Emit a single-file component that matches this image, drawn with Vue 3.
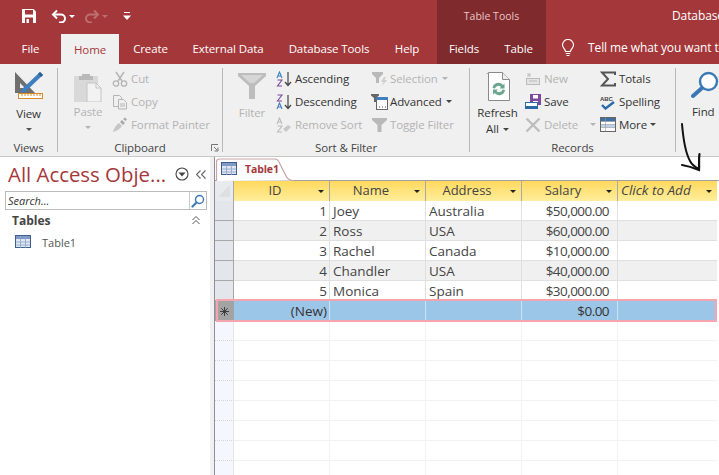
<script setup>
const columns = [
  { name: 'ID' },
  { name: 'Name' },
  { name: 'Address' },
  { name: 'Salary' },
  { name: 'Click to Add', add: true },
]
const rows = [
  ['1', 'Joey', 'Australia', '$50,000.00'],
  ['2', 'Ross', 'USA', '$60,000.00'],
  ['3', 'Rachel', 'Canada', '$10,000.00'],
  ['4', 'Chandler', 'USA', '$40,000.00'],
  ['5', 'Monica', 'Spain', '$30,000.00'],
]
const blanks = 8
</script>

<template>
  <div class="app">
    <header class="top">
      <div class="title-row">
        <div class="qat">
          <svg class="q-save" width="16" height="16" viewBox="0 0 16 16"><path d="M1 1h11.5L15 3.500V15H1z" fill="#fff"/><rect x="4" y="2" width="8" height="4.500" fill="#a4373a"/><rect x="4" y="9.500" width="8" height="5.500" fill="#a4373a"/><rect x="5.500" y="11" width="2.400" height="4" fill="#fff"/></svg>
          <svg class="q-undo" width="16" height="14" viewBox="0 0 16 14"><path d="M6 1.500 2 5.500l4 4" fill="none" stroke="#fff" stroke-width="2"/><path d="M2.500 5.500H10a4 4 0 0 1 0 8H8" fill="none" stroke="#fff" stroke-width="2"/></svg>
          <span class="q-caret"></span>
          <svg class="q-redo" width="16" height="14" viewBox="0 0 16 14"><path d="M10 1.500l4 4-4 4" fill="none" stroke="#bd6f71" stroke-width="2"/><path d="M13.500 5.500H6a4 4 0 0 0 0 8h2" fill="none" stroke="#bd6f71" stroke-width="2"/></svg>
          <span class="q-caret dim"></span>
          <svg class="q-more" width="8" height="9" viewBox="0 0 8 9"><rect x="1" y="0" width="6" height="1" fill="#fff"/><path d="M0 3.500h8L4 8z" fill="#fff"/></svg>
        </div>
        <div class="ctx-title">Table Tools</div>
        <div class="doc-title">Database</div>
      </div>
      <nav class="tabs">
        <span class="tab w-file">File</span>
        <span class="tab w-home active">Home</span>
        <span class="tab w-create">Create</span>
        <span class="tab w-ext">External Data</span>
        <span class="tab w-db">Database Tools</span>
        <span class="tab w-help">Help</span>
        <span class="tab w-fields ctx">Fields</span>
        <span class="tab w-table ctx">Table</span>
        <svg class="bulb" width="14" height="18" viewBox="0 0 14 18"><path d="M4.500 12.500C4.500 10 1.500 9 1.500 6a5.500 5.500 0 0 1 11 0c0 3-3 4-3 6.500z" fill="none" stroke="#fff" stroke-width="1.200"/><path d="M4.800 14.500h4.400M5.500 16.500h3" stroke="#fff" stroke-width="1.200"/></svg>
        <span class="tell">Tell me what you want to</span>
      </nav>
    </header>

    <section class="ribbon">
      <div class="group g-views">
        <div class="g-body center-col">
          <svg class="big-icon" width="30" height="30" viewBox="0 0 30 30">
            <path d="M1 2v21h20zM6 13v5h5z" fill="#6e6e6e" fill-rule="evenodd"/>
            <path d="M26 2l3 3L11 22l-4 1 1-4z" fill="#3f7fbf"/>
            <path d="M26 2l3 3-2 2-3-3z" fill="#2a5f9a"/>
            <rect x="4.500" y="23.500" width="24" height="5" fill="#fff" stroke="#d58b2c"/>
            <path d="M8 24v2M11 24v2M14 24v2M17 24v2M20 24v2M23 24v2M26 24v2" stroke="#d58b2c"/>
          </svg>
          <span class="lbl-big">View</span>
          <span class="drop"></span>
        </div>
        <div class="g-name">Views</div>
      </div>
      <i class="sep"></i>

      <div class="group g-clip">
        <div class="g-body">
          <div class="center-col paste">
            <svg class="big-icon" width="28" height="29" viewBox="0 0 28 29">
              <path d="M0 3h24v26H0z" fill="#d9d9d9"/>
              <path d="M8 1h8v2h3v4H5V3h3z" fill="#b9b9b9"/>
              <path d="M13 10h9l5 5v14H13z" fill="#f2f2f2" stroke="#c4c4c4"/>
              <path d="M22 10v5h5" fill="none" stroke="#c4c4c4"/>
            </svg>
            <span class="lbl-big off">Paste</span>
            <span class="drop off"></span>
          </div>
          <div class="small-col">
            <div class="item off">
              <svg width="16" height="16" viewBox="0 0 16 16"><path d="M4 1l6 9M12 1 6 10" stroke="#b5b5b5" stroke-width="1.500" fill="none"/><circle cx="4" cy="12.500" r="2.700" fill="none" stroke="#b5b5b5" stroke-width="1.300"/><circle cx="12" cy="12.500" r="2.700" fill="none" stroke="#b5b5b5" stroke-width="1.300"/></svg>
              <span>Cut</span>
            </div>
            <div class="item off">
              <svg width="16" height="16" viewBox="0 0 16 16"><path d="M1.500 1.500h6l2 2v9h-8z" fill="#f0f0f0" stroke="#b5b5b5"/><path d="M6.500 5.500h5l3 3v6.500h-8z" fill="#f0f0f0" stroke="#b5b5b5"/><path d="M8 10h5M8 12h5" stroke="#b5b5b5"/></svg>
              <span>Copy</span>
            </div>
            <div class="item off">
              <svg width="16" height="16" viewBox="0 0 16 16"><path d="M1 15c1-4 3-7 6-9l3 3c-2 3-5 5-9 6z" fill="#c6c6c6"/><path d="M8 5l2-2 3 3-2 2zM11 2l2-1.500 2 2L13.500 4z" fill="#a9a9a9"/></svg>
              <span>Format Painter</span>
            </div>
          </div>
        </div>
        <div class="g-name">Clipboard</div>
        <svg class="launcher" width="8" height="8" viewBox="0 0 8 8"><path d="M.5 7V.5H7" fill="none" stroke="#777"/><path d="M3 3l3.500 3.500M7 3.500V7H3.500" fill="none" stroke="#777"/></svg>
      </div>
      <i class="sep"></i>

      <div class="group g-sort">
        <div class="g-body">
          <div class="center-col filter">
            <svg class="big-icon" width="28" height="28" viewBox="0 0 28 28"><path d="M0 1h28v3L17 14v13h-6V14L0 4z" fill="#bdbdbd"/><path d="M3 3h22l-9 8h-4z" fill="#d6d6d6"/></svg>
            <span class="lbl-big off">Filter</span>
          </div>
          <div class="small-col sort-a">
            <div class="item">
              <svg width="16" height="16" viewBox="0 0 16 16"><path d="M12 1v13M9 11l3 3.500 3-3.500" fill="none" stroke="#444" stroke-width="1.200"/><path d="M1 7l2.500-6L6 7M2 5h3" fill="none" stroke="#3f7fbf" stroke-width="1.100"/><path d="M1.500 9H6l-4.500 6H6" fill="none" stroke="#7c4b9f" stroke-width="1.100"/></svg>
              <span>Ascending</span>
            </div>
            <div class="item">
              <svg width="16" height="16" viewBox="0 0 16 16"><path d="M12 1v13M9 11l3 3.500 3-3.500" fill="none" stroke="#444" stroke-width="1.200"/><path d="M1.500 1H6L1.500 7H6" fill="none" stroke="#7c4b9f" stroke-width="1.100"/><path d="M1 15l2.500-6L6 15M2 13h3" fill="none" stroke="#3f7fbf" stroke-width="1.100"/></svg>
              <span>Descending</span>
            </div>
            <div class="item off">
              <svg width="16" height="16" viewBox="0 0 16 16"><path d="M1 7l2.500-6L6 7M2 5h3M1.500 9H6l-4.500 6H6" fill="none" stroke="#bbb" stroke-width="1.100"/><path d="M7 12l5-4 3 2-5 5z" fill="#c8c8c8"/></svg>
              <span>Remove Sort</span>
            </div>
          </div>
          <div class="small-col sort-b">
            <div class="item off">
              <svg width="18" height="16" viewBox="0 0 18 16"><path d="M1 1h11v2L8 7v5H5V7L1 3z" fill="#b9b9b9"/><path d="M13 6l-3 5h2.500l-1.500 4 5-6h-2.500L15 6z" fill="#cfcfcf"/></svg>
              <span>Selection</span><b class="caret off"></b>
            </div>
            <div class="item">
              <svg width="18" height="16" viewBox="0 0 18 16"><rect x="5.500" y="3.500" width="11" height="12" fill="#fff" stroke="#666"/><rect x="5" y="3" width="12" height="3" fill="#3f7fbf"/><path d="M8 13h1M11 13h1M14 13h1" stroke="#444"/><path d="M0 0h8v1.500L5 4v4H3V4L0 1.500z" fill="#666"/></svg>
              <span>Advanced</span><b class="caret"></b>
            </div>
            <div class="item off">
              <svg width="18" height="16" viewBox="0 0 18 16"><path d="M1 1h15v2l-5.500 5v7h-4V8L1 3z" fill="#b9b9b9"/></svg>
              <span>Toggle Filter</span>
            </div>
          </div>
        </div>
        <div class="g-name">Sort &amp; Filter</div>
      </div>
      <i class="sep"></i>

      <div class="group g-rec">
        <div class="g-body">
          <div class="center-col refresh">
            <svg class="big-icon" width="24" height="30" viewBox="0 0 24 30">
              <path d="M.5 2.500h15" stroke="#aaa" fill="none"/>
              <path d="M2.500 1.500h14l7 7v21h-21z" fill="#fff" stroke="#8a8a8a"/>
              <path d="M16.500 1.500v7h7" fill="#eee" stroke="#8a8a8a"/>
              <path d="M6.500 17a6 6 0 0 1 10.500-3l1.500-1.500v5h-5l1.500-1.500a3.500 3.500 0 0 0-6 1.500z" fill="#6aa58f"/>
              <path d="M19 19a6 6 0 0 1-10.500 3L7 23.500v-5h5L10.500 20a3.500 3.500 0 0 0 6-1.500z" fill="#6aa58f"/>
            </svg>
            <span class="lbl-big">Refresh</span>
            <span class="lbl-big all">All<b class="caret"></b></span>
          </div>
          <div class="small-col rec-a">
            <div class="item off">
              <svg width="16" height="16" viewBox="0 0 16 16"><rect x="1.500" y="7.500" width="13" height="6" fill="#e4e4e4" stroke="#bbb"/><path d="M4 2v4M2 4h4M2.500 2.500l3 3M5.500 2.500l-3 3" stroke="#c4c4c4"/><path d="M4 10h8" stroke="#bbb"/></svg>
              <span>New</span>
            </div>
            <div class="item">
              <svg width="16" height="16" viewBox="0 0 16 16"><rect x="5" y="0" width="11" height="11" fill="#7c4b9f"/><rect x="8" y="1" width="5" height="3.500" fill="#fff"/><rect x="8" y="7" width="5" height="4" fill="#fff"/><rect x=".5" y="8.500" width="12" height="6" fill="#fff" stroke="#2a6aa8"/><rect x="1" y="12" width="11" height="2" fill="#2a6aa8"/></svg>
              <span>Save</span>
            </div>
            <div class="item off">
              <svg width="16" height="16" viewBox="0 0 16 16"><path d="M1.500 1.500l13 13M14.500 1.500l-13 13" stroke="#bdbdbd" stroke-width="2.400"/></svg>
              <span>Delete</span><b class="caret off del-caret"></b>
            </div>
          </div>
          <div class="small-col rec-b">
            <div class="item">
              <svg width="16" height="16" viewBox="0 0 16 16"><path d="M15 4V1.500H2L8 8l-6 6.500h13V12" fill="none" stroke="#555" stroke-width="2"/></svg>
              <span>Totals</span>
            </div>
            <div class="item">
              <svg width="16" height="16" viewBox="0 0 16 16"><text x="0" y="6.500" class="abc">ABC</text><path d="M2 11l3.500 3.500L14 8" fill="none" stroke="#2a6aa8" stroke-width="2.400"/></svg>
              <span>Spelling</span>
            </div>
            <div class="item">
              <svg width="16" height="16" viewBox="0 0 16 16"><rect x=".5" y=".5" width="15" height="14" fill="#fff" stroke="#666"/><rect x="1" y="1" width="14" height="3.500" fill="#3f6fa3"/><rect x="1" y="7.500" width="14" height="3" fill="#bcd3ea"/><path d="M1 4.500h14M1 7.500h14M1 10.500h14M5.500 1v13" stroke="#999" stroke-width=".6"/></svg>
              <span>More</span><b class="caret"></b>
            </div>
          </div>
        </div>
        <div class="g-name">Records</div>
      </div>
      <i class="sep"></i>

      <div class="group g-find">
        <div class="center-col">
          <svg class="big-icon" width="28" height="28" viewBox="0 0 28 28"><circle cx="17.500" cy="10.500" r="8.500" fill="#fff" stroke="#3a78b5" stroke-width="2.400"/><path d="M11 17 2 25" stroke="#3a78b5" stroke-width="4" stroke-linecap="round"/></svg>
          <span class="lbl-big">Find</span>
        </div>
      </div>
    </section>

    <main class="work">
      <aside class="nav">
        <div class="nav-head">
          <span class="nav-title">All Access Obje...</span>
          <svg class="nav-circle" width="14" height="14" viewBox="0 0 14 14"><circle cx="7" cy="7" r="6" fill="#fff" stroke="#444" stroke-width="1.100"/><path d="M3.500 5.500h7L7 9.500z" fill="#444"/></svg>
          <svg class="nav-coll" width="10" height="9" viewBox="0 0 10 9"><path d="M4.500 .5l-4 4 4 4M9.500 .5l-4 4 4 4" fill="none" stroke="#666" stroke-width="1.100"/></svg>
        </div>
        <div class="search">
          <span class="search-text">Search...</span>
          <span class="search-btn">
            <svg width="14" height="14" viewBox="0 0 14 14"><circle cx="8.500" cy="5.500" r="4" fill="#fff" stroke="#3a78b5" stroke-width="1.400"/><path d="M5.500 8.500l-4 4" stroke="#3a78b5" stroke-width="2.200" stroke-linecap="round"/></svg>
          </span>
        </div>
        <div class="nav-section">
          <span>Tables</span>
          <svg width="8" height="9" viewBox="0 0 8 9"><path d="M.5 4 4 .5 7.500 4M.5 8 4 4.500 7.500 8" fill="none" stroke="#555"/></svg>
        </div>
        <div class="nav-item">
          <svg width="16" height="14" viewBox="0 0 16 14"><rect x=".5" y=".5" width="15" height="12" fill="#dfe7f3" stroke="#3f5f8f"/><rect x="1" y="1" width="14" height="3" fill="#7f9ac4"/><path d="M1 7h14M1 10h14M5.500 1v12M10.500 1v12" stroke="#8ca3c7" stroke-width=".8"/></svg>
          <span>Table1</span>
        </div>
      </aside>
      <div class="splitter"></div>

      <div class="doc">
        <div class="doc-tabs">
          <div class="doc-tab">
            <svg class="tab-shape" width="79" height="24" viewBox="0 0 79 24"><path d="M1.500 24V5q0-3 3-3H60q3 0 5 5l6 12q2 4.500 8 4.500" fill="#fff" stroke="#c8a4a6" stroke-width="1.200"/></svg>
            <svg class="tab-icon" width="16" height="14" viewBox="0 0 16 14"><rect x=".5" y=".5" width="15" height="12" fill="#dfe7f3" stroke="#3f5f8f"/><rect x="1" y="1" width="14" height="3" fill="#7f9ac4"/><path d="M1 7h14M1 10h14M5.500 1v12M10.500 1v12" stroke="#8ca3c7" stroke-width=".8"/></svg>
            <span class="tab-name">Table1</span>
          </div>
        </div>

        <div class="grid">
          <div class="row head">
            <div class="sel corner"><svg width="14" height="14" viewBox="0 0 14 14"><path d="M13 1v12H1z" fill="#dcdfe3"/></svg></div>
            <div v-for="c in columns" :key="c.name" class="cell" :class="{ add: c.add }">
              <span class="head-text">{{ c.name }}</span>
              <i class="head-arrow"></i>
            </div>
          </div>

          <div v-for="(r, i) in rows" :key="r[0]" class="row body" :class="{ alt: i % 2 === 1 }">
            <div class="sel"></div>
            <div class="cell num">{{ r[0] }}</div>
            <div class="cell">{{ r[1] }}</div>
            <div class="cell">{{ r[2] }}</div>
            <div class="cell num money">{{ r[3] }}</div>
            <div class="cell"></div>
          </div>

          <div class="row body new">
            <div class="sel">
              <svg width="9" height="9" viewBox="0 0 9 9"><path d="M4.500 0v9M0 4.500h9M1.300 1.300l6.400 6.400M7.700 1.300 1.300 7.700" stroke="#333" stroke-width=".9"/></svg>
            </div>
            <div class="cell num">(New)</div>
            <div class="cell"></div>
            <div class="cell"></div>
            <div class="cell num money">$0.00</div>
            <div class="cell"></div>
          </div>

          <div v-for="n in blanks" :key="n" class="row blank">
            <div class="sel"></div>
            <div class="cell"></div>
            <div class="cell"></div>
            <div class="cell"></div>
            <div class="cell"></div>
            <div class="cell"></div>
          </div>
        </div>
      </div>
    </main>

    <svg class="scribble" width="30" height="56" viewBox="0 0 30 56">
      <path d="M5 2C6 14 8 30 13 39c2 4 5 6 9 8" fill="none" stroke="#111" stroke-width="2" stroke-linecap="round"/>
      <path d="M5 43c6 1 12 3 17 5 .5-6-.5-11 .5-16" fill="none" stroke="#111" stroke-width="2.200" stroke-linecap="round"/>
    </svg>
  </div>
</template>

<style>
html, body { margin: 0; padding: 0; background: #fff; }
</style>

<style scoped>
.app {
  position: relative;
  width: 719px;
  height: 475px;
  overflow: hidden;
  background: #fff;
  font-family: "Open Sans", "Noto Sans", sans-serif;
  font-size: 11.500px;
  letter-spacing: -0.1px;
  color: #444;
}
svg { display: block; flex: none; }

/* top band */
.top { background: #a4373a; color: #fff; height: 64px; }
.title-row { display: flex; height: 32px; }
.qat { display: flex; align-items: center; flex: none; width: 437px; padding-left: 21px; box-sizing: border-box; }
.q-undo { margin-left: 14px; }
.q-caret { width: 0; height: 0; margin-left: 2px; border: 3px solid transparent; border-top: 3px solid #fff; border-bottom: 0; }
.q-caret.dim { border-top-color: #bd6f71; }
.q-redo { margin-left: 9px; }
.q-more { margin-left: 15px; }
.ctx-title {
  flex: none; width: 109px; background: #7f2a2d; color: #e8c6c7; font-size: 10.500px; letter-spacing: 0;
  display: flex; align-items: center; justify-content: center;
}
.doc-title { flex: none; margin-left: 126px; line-height: 32px; font-size: 12px; white-space: nowrap; }

.tabs { display: flex; height: 32px; align-items: stretch; white-space: nowrap; }
.tab { display: flex; align-items: center; justify-content: center; flex: none; }
.w-file { width: 61px; }
.w-home { width: 58px; }
.w-create { width: 63px; }
.w-ext { width: 92px; }
.w-db { width: 110px; }
.w-help { width: 46px; }
.w-fields { width: 54px; margin-left: 7px; }
.w-table { width: 55px; }
.tab.active { background: #f0f0f0; color: #a4373a; margin-top: 2px; }
.tab.ctx { background: #7f2a2d; }
.bulb { margin: 7px 0 0 15px; }
.tell { flex: none; margin-left: 13px; line-height: 32px; font-size: 12px; }

/* ribbon */
.ribbon {
  display: flex; height: 92px; background: #f0f0f0; border-bottom: 1px solid #c8c8c8;
  box-sizing: content-box; white-space: nowrap;
}
.sep { width: 1px; height: 84px; margin-top: 4px; background: #b8b8b8; flex: none; }
.group { position: relative; display: flex; flex-direction: column; flex: none; height: 92px; }
.g-views { width: 57px; }
.g-clip { width: 164px; }
.g-sort { width: 246px; }
.g-rec { width: 205px; }
.g-find { width: 43px; }
.g-body { display: flex; height: 76px; }
.g-name { text-align: center; line-height: 16px; color: #444; }
.center-col { display: flex; flex-direction: column; align-items: center; }
.big-icon { margin-top: 6px; }
.lbl-big { line-height: 16px; color: #333; }
.lbl-big.off, .off { color: #b3b3b3; }
.g-views .center-col { height: 76px; }
.g-views .big-icon { margin-left: 1px; }
.g-views .lbl-big { margin-top: 6px; }
.g-clip .paste { width: 46px; margin-left: 7px; }
.g-clip .paste .big-icon { margin-top: 9px; }
.g-clip .paste .lbl-big { margin-top: 2px; }
.drop { width: 0; height: 0; margin-top: 6px; border: 3px solid transparent; border-top: 3px solid #555; border-bottom: 0; }
.drop.off { border-top-color: #b3b3b3; }
.small-col { display: flex; flex-direction: column; margin-top: 3px; }
.item { display: flex; align-items: center; height: 23px; gap: 3px; color: #333; }
.item.off { color: #b3b3b3; }
.g-clip .small-col { margin-left: 1px; }
.filter { width: 38px; margin-left: 10px; }
.filter .big-icon { margin-top: 8px; }
.filter .lbl-big { margin-top: 5px; }
.sort-a { margin-left: 5px; width: 95px; }
.sort-b .item { gap: 1px; }
.caret { display: inline-block; width: 0; height: 0; margin-left: 0; border: 3px solid transparent; border-top: 3px solid #444; border-bottom: 0; }
.caret.off { border-top-color: #b3b3b3; }
.sort-b .caret { margin-left: 3px; }
.all .caret { margin-left: 4px; vertical-align: middle; }
.del-caret { margin-left: 9px; }
.refresh { width: 55px; }
.refresh .big-icon { margin-top: 7px; }
.refresh .lbl-big { margin-top: 4px; }
.refresh .all { margin-top: 0; }
.rec-a { width: 75px; }
.abc { font-size: 6px; font-weight: 700; fill: #444; font-family: "Liberation Sans", sans-serif; }
.launcher { position: absolute; right: 3px; bottom: 4px; }
.g-find .center-col { align-items: flex-start; padding-left: 15px; }
.g-find .big-icon { margin-top: 7px; }
.g-find .lbl-big { margin: 5px 0 0 1px; }

/* work area */
.work { display: flex; height: 318px; letter-spacing: 0; }
.nav { width: 210px; flex: none; box-sizing: border-box; padding-left: 5px; background: #fff; }
.nav-head { display: flex; align-items: center; height: 33px; padding: 1px 0 0 3px; box-sizing: border-box; }
.nav-title { width: 166px; font-size: 20.400px; color: #a4373a; white-space: nowrap; }
.nav-circle { margin-left: 1px; }
.nav-coll { margin-left: 7px; }
.search {
  display: flex; width: 202px; height: 19px; box-sizing: border-box; margin-top: 1px;
  border: 1px solid #bbb; background: #fff;
}
.search-text { flex: 1; font-style: italic; font-size: 11px; line-height: 17px; padding-left: 2px; color: #333; }
.search-btn { width: 16px; border-left: 1px solid #ccc; display: flex; align-items: center; justify-content: center; }
.nav-section {
  display: flex; align-items: center; justify-content: space-between; width: 192px; height: 20px;
  margin-bottom: 2px; padding-left: 7px; box-sizing: border-box; font-weight: 700; font-size: 12px; color: #444;
}
.nav-section svg { margin-right: -3px; }
.nav-item { display: flex; align-items: center; gap: 11px; height: 20px; padding-left: 10px; font-size: 11px; color: #555; }

.splitter { width: 4px; flex: none; background: #f0f0f0; }

.doc { flex: 1; display: flex; flex-direction: column; min-width: 0; border-left: 1px solid #8f8f9c; }
.doc-tabs { height: 24px; border-bottom: 1px solid #9f9f9f; box-sizing: border-box; }
.doc-tab { position: relative; display: flex; align-items: center; width: 79px; height: 24px; padding-left: 6px; box-sizing: border-box; }
.tab-shape { position: absolute; left: 0; top: 0; }
.tab-icon { position: relative; }
.tab-name { position: relative; margin-left: 8px; font-weight: 700; font-size: 10.500px; letter-spacing: -0.1px; color: #a4373a; }

.grid { display: flex; flex-direction: column; }
.row { display: grid; grid-template-columns: 19px 96px 96px 96px 96px 99px; height: 20px; flex: none; }
.cell { box-sizing: border-box; border-right: 1px solid #e0e0e0; border-bottom: 1px solid #e0e0e0; line-height: 21px; padding: 0 3px; font-size: 13.500px; color: #444; white-space: nowrap; overflow: hidden; }
.num { text-align: right; padding-right: 2px; }
.money { padding-right: 8px; letter-spacing: -0.55px; }
.sel { box-sizing: border-box; background: #e3e6ea; border-right: 1px solid #a8a8a8; border-bottom: 1px solid #a8a8a8; display: flex; align-items: center; justify-content: center; }
.head .sel { background: #e8eaed; border-bottom: 0; }
.head .cell {
  position: relative; background: linear-gradient(#ffd95e, #ffee9c); border-right: 1px solid #a9a9a9;
  border-bottom: 0; text-align: center; padding-right: 16px; font-size: 13px; line-height: 19px;
}
.head .cell:last-child { border-right: 0; }
.head .add { text-align: left; font-style: italic; font-size: 13.500px; padding: 0 3px; }
.head-arrow {
  position: absolute; right: 5px; top: 9px; width: 0; height: 0;
  border: 3px solid transparent; border-top: 3px solid #222; border-bottom: 0;
}
.body.alt .cell { background: #f0f0f0; }
.body .cell:last-child { border-right: 0; }
.new { position: relative; }
.new .cell { background: #9cc6e8; border-right-color: #cfe2f3; border-bottom: 0; color: #333; }
.new .sel { background: #a3a3a3; border: 0; }
.new::after {
  content: ""; position: absolute; left: 1px; top: -2px; right: 2px; bottom: -1px;
  border: 2px solid #f4a5ad; box-sizing: content-box; height: 19px; pointer-events: none;
}
.blank .sel { background: #f6f7fe; border-right: 1px solid #e6e6e6; border-bottom: 1px dotted #d6d6d6; }
.blank .cell { background: #fff; border-right-color: #f2f2f2; border-bottom-color: #f2f2f2; }
.blank .cell:last-child { border-right: 0; }

.scribble { position: absolute; left: 677px; top: 122px; }
</style>
